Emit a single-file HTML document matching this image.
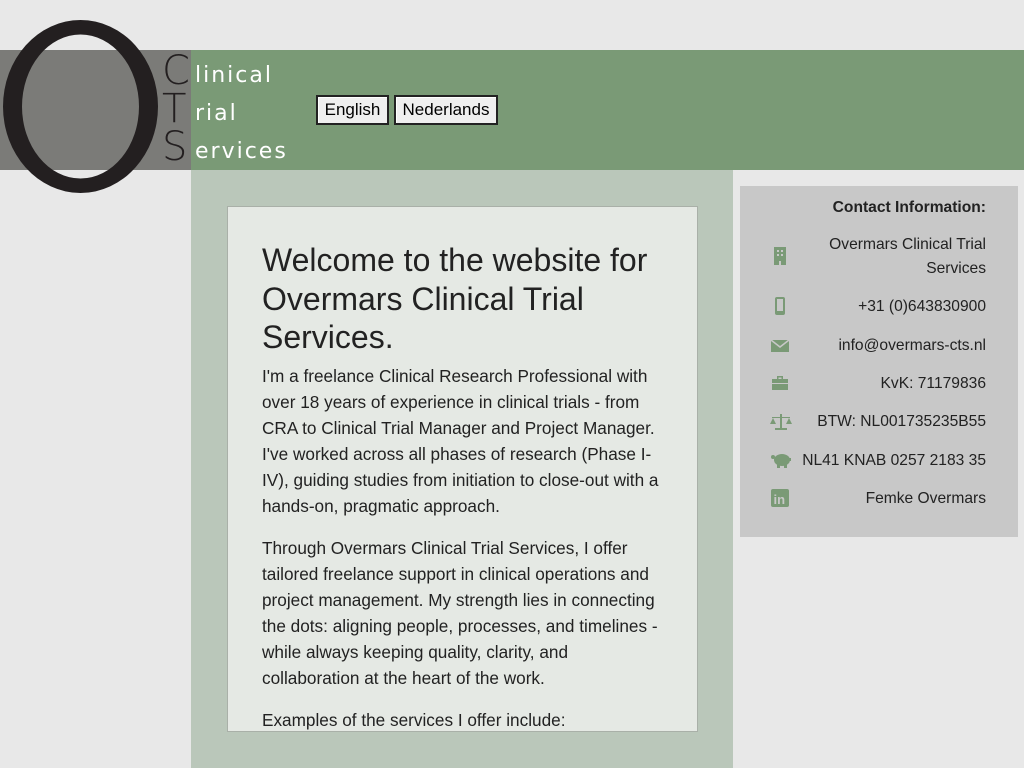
<!DOCTYPE html>
<html><head><meta charset="utf-8"><style>
body{margin:0;width:1024px;height:768px;background:#e8e8e8;font-family:"Liberation Sans",sans-serif;position:relative;overflow:hidden}
.gray{position:absolute;left:0;top:50px;width:191px;height:120px;background:#7b7b78}
.green{position:absolute;left:191px;top:50px;width:833px;height:120px;background:#7a9a76}
.o{position:absolute;left:0;top:0}
.cts{position:absolute;left:162px;top:52px;font-size:40px;line-height:38px;color:#231f20;font-family:"DejaVu Sans",sans-serif;font-weight:200}
.sub{position:absolute;left:195px;top:57px;font-size:22px;line-height:38px;color:#fff;letter-spacing:2px;font-family:"DejaVu Sans",sans-serif}
.btn{position:absolute;top:95px;height:30px;box-sizing:border-box;background:#efefef;font-size:17px;line-height:26px;text-align:center;color:#000;border:2px solid #222;box-shadow:inset 1px 1px 0 #fff}
.main{position:absolute;left:191px;top:170px;width:542px;height:598px;background:#bac7ba}
.box{position:absolute;left:227px;top:206px;width:471px;height:526px;box-sizing:border-box;background:#e5e9e4;border:1px solid #a9b0a8;padding:34px 30px 0 34px;color:#222;overflow:hidden}
h1{font-weight:normal;font-size:32px;line-height:38.5px;margin:0 0 6px}
p{font-size:17.2px;line-height:26px;margin:0 0 16px}
.side{position:absolute;left:740px;top:186px;width:278px;height:351px;background:#c8c8c8;color:#222}
.row{position:absolute;right:32px;text-align:right;font-size:15.6px;line-height:24px}
.ic{position:absolute;left:31px;width:18px;height:18px;fill:#7a9a76}
</style></head><body>
<div class="gray"></div><div class="green"></div>
<svg class="o" width="170" height="200"><path fill-rule="evenodd" fill="#231f20" d="M3 106.5a77.5 86.5 0 1 0 155 0a77.5 86.5 0 1 0 -155 0zM22 106.5a58.5 72 0 1 0 117 0a58.5 72 0 1 0 -117 0z"/></svg>
<div class="cts">C<br>T<br>S</div>
<div class="sub">linical<br>rial<br>ervices</div>
<div class="btn" style="left:316px;width:73px">English</div>
<div class="btn" style="left:394px;width:104px">Nederlands</div>
<div class="main"></div>
<div class="box">
<h1>Welcome to the website for Overmars Clinical Trial Services.</h1>
<p>I'm a freelance Clinical Research Professional with over 18 years of experience in clinical trials - from CRA to Clinical Trial Manager and Project Manager. I've worked across all phases of research (Phase I-IV), guiding studies from initiation to close-out with a hands-on, pragmatic approach.</p>
<p>Through Overmars Clinical Trial Services, I offer tailored freelance support in clinical operations and project management. My strength lies in connecting the dots: aligning people, processes, and timelines - while always keeping quality, clarity, and collaboration at the heart of the work.</p>
<p>Examples of the services I offer include:</p>
</div>
<div class="side">
<div class="row" style="top:10px;font-weight:bold">Contact Information:</div>
<div class="row" style="top:47px">Overmars Clinical Trial<br>Services</div>
<div class="row" style="top:109px">+31 (0)643830900</div>
<div class="row" style="top:148px">info@overmars-cts.nl</div>
<div class="row" style="top:186px">KvK: 71179836</div>
<div class="row" style="top:224px">BTW: NL001735235B55</div>
<div class="row" style="top:263px">NL41 KNAB 0257 2183 35</div>
<div class="row" style="top:301px">Femke Overmars</div>
<svg class="ic" style="top:61px" viewBox="0 0 18 18"><path d="M3 0h12v18h-5v-4h-2v4H3z"/><rect x="6" y="3" width="2" height="2" fill="#c8c8c8"/><rect x="10" y="3" width="2" height="2" fill="#c8c8c8"/><rect x="6" y="7" width="2" height="2" fill="#c8c8c8"/><rect x="10" y="7" width="2" height="2" fill="#c8c8c8"/></svg>
<svg class="ic" style="top:111px" viewBox="0 0 18 18"><rect x="4" y="0" width="10" height="18" rx="2"/><rect x="6" y="2" width="6" height="12" fill="#c8c8c8"/></svg>
<svg class="ic" style="top:151px" viewBox="0 0 18 18"><path d="M0 3h18v12H0z"/><path d="M0 3l9 7 9-7" fill="none" stroke="#c8c8c8" stroke-width="1.5"/></svg>
<svg class="ic" style="top:188px" viewBox="0 0 18 18"><path d="M6 2h6v3h5v11H1V5h5zM7.5 3.5v1.5h3V3.5z"/><rect x="1" y="9" width="16" height="1" fill="#c8c8c8"/></svg>
<svg class="ic" style="top:227px;width:22px;left:30px" viewBox="0 0 22 18"><path d="M10 1h2v14h5v2H5v-2h5zM2 4h18v1H2zM0 11l3-6 3 6zM16 11l3-6 3 6z"/></svg>
<svg class="ic" style="top:265px;width:22px;left:30px" viewBox="0 0 22 18"><ellipse cx="12" cy="9" rx="8" ry="6"/><circle cx="3" cy="6" r="2"/><rect x="7" y="12" width="3" height="5"/><rect x="14" y="12" width="3" height="5"/><rect x="18" y="7" width="3" height="3"/></svg>
<svg class="ic" style="top:303px" viewBox="0 0 18 18"><rect width="18" height="18" rx="2"/><text x="2.5" y="15" font-size="13" font-weight="bold" fill="#c8c8c8" font-family="Liberation Sans">in</text></svg>
</div>
</body></html>
